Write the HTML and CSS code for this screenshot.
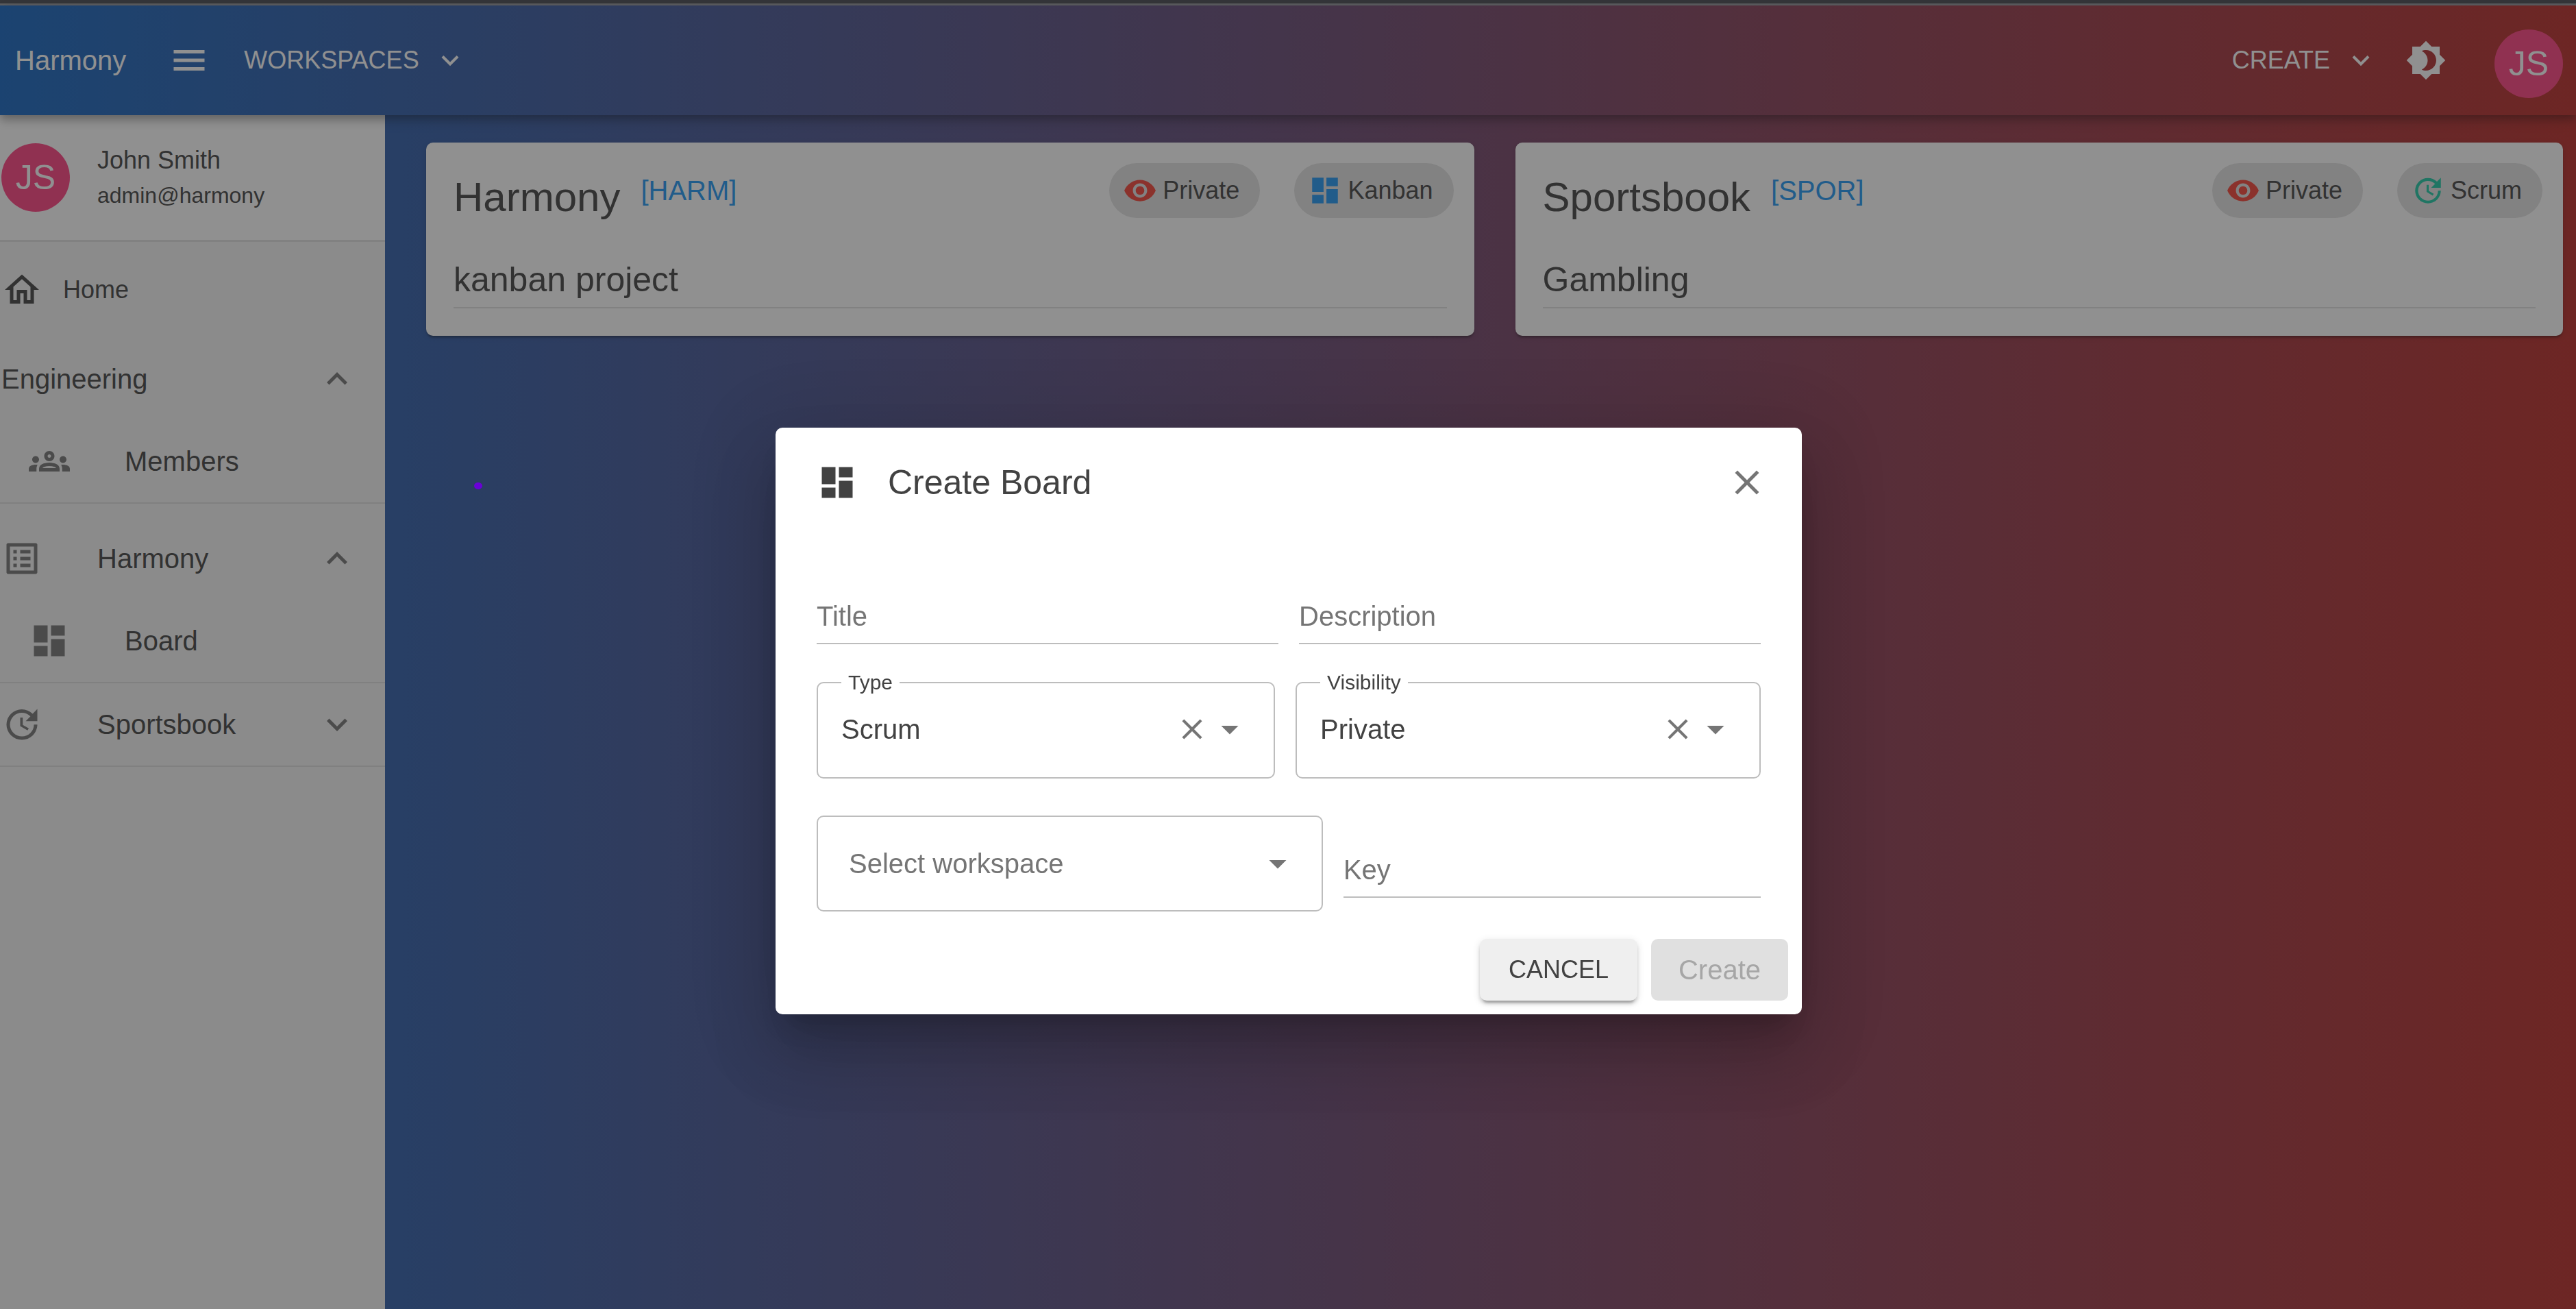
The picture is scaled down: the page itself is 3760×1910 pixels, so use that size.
FILE: index.html
```html
<!DOCTYPE html>
<html lang="en">
<head>
<meta charset="utf-8">
<title>Harmony</title>
<link rel="stylesheet" href="styles.css">
</head>
<body>
<svg class="sprite" aria-hidden="true">
  <symbol id="i-menu" viewBox="0 0 24 24"><path d="M3 18h18v-2H3v2zm0-5h18v-2H3v2zm0-7v2h18V6H3z"/></symbol>
  <symbol id="i-more" viewBox="0 0 24 24"><path d="M16.59 8.59L12 13.17 7.41 8.59 6 10l6 6 6-6z"/></symbol>
  <symbol id="i-less" viewBox="0 0 24 24"><path d="M12 8l-6 6 1.41 1.41L12 10.83l4.59 4.58L18 14z"/></symbol>
  <symbol id="i-theme" viewBox="0 0 24 24"><path d="M20 8.69V4h-4.69L12 .69 8.69 4H4v4.69L.69 12 4 15.31V20h4.69L12 23.31 15.31 20H20v-4.69L23.31 12 20 8.69zM12 18c-.89 0-1.74-.2-2.5-.55C11.56 16.5 13 14.42 13 12s-1.44-4.5-3.5-5.45C10.26 6.2 11.11 6 12 6c3.31 0 6 2.69 6 6s-2.69 6-6 6z"/></symbol>
  <symbol id="i-home" viewBox="0 0 24 24"><path d="M12 5.69l5 4.5V18h-2v-6H9v6H7v-7.81l5-4.5M12 3L2 12h3v8h6v-6h2v6h6v-8h3L12 3z"/></symbol>
  <symbol id="i-groups" viewBox="0 0 24 24"><path d="M4 13c1.1 0 2-.9 2-2s-.9-2-2-2-2 .9-2 2 .9 2 2 2zm1.13 1.1C4.76 14.04 4.39 14 4 14c-.99 0-1.93.21-2.78.58C.48 14.9 0 15.62 0 16.43V18h4.5v-1.61c0-.83.23-1.61.63-2.29zM20 13c1.1 0 2-.9 2-2s-.9-2-2-2-2 .9-2 2 .9 2 2 2zm4 3.43c0-.81-.48-1.53-1.22-1.85-.85-.37-1.79-.58-2.78-.58-.39 0-.76.04-1.13.1.4.68.63 1.46.63 2.29V18H24v-1.57zm-7.76-2.78c-1.17-.52-2.61-.9-4.24-.9-1.63 0-3.07.39-4.24.9C6.68 14.13 6 15.21 6 16.39V18h12v-1.61c0-1.18-.68-2.26-1.76-2.74zM8.07 16c.09-.23.13-.39.91-.69.97-.38 1.99-.56 3.02-.56s2.05.18 3.02.56c.77.3.81.46.91.69H8.07zM12 8c.55 0 1 .45 1 1s-.45 1-1 1-1-.45-1-1 .45-1 1-1m0-2c-1.66 0-3 1.34-3 3s1.34 3 3 3 3-1.34 3-3-1.34-3-3-3z"/></symbol>
  <symbol id="i-list" viewBox="0 0 24 24"><path d="M11 7h6v2h-6zm0 4h6v2h-6zm0 4h6v2h-6zM7 7h2v2H7zm0 4h2v2H7zm0 4h2v2H7zM20.1 3H3.9c-.5 0-.9.4-.9.9v16.2c0 .4.4.9.9.9h16.2c.4 0 .9-.5.9-.9V3.900c0-.5-.5-.9-.9-.9zM19 19H5V5h14v14z"/></symbol>
  <symbol id="i-board" viewBox="0 0 24 24"><path d="M3 13h8V3H3v10zm0 8h8v-6H3v6zm10 0h8V11h-8v10zm0-18v6h8V3h-8z"/></symbol>
  <symbol id="i-update" viewBox="0 0 24 24"><path d="M21 10.120h-6.780l2.740-2.820c-2.730-2.700-7.150-2.800-9.880-.1-2.730 2.710-2.730 7.080 0 9.790s7.150 2.710 9.880 0C18.320 15.650 19 14.080 19 12.100h2c0 1.980-.88 4.550-2.640 6.290-3.510 3.480-9.210 3.480-12.720 0-3.500-3.470-3.530-9.110-.02-12.580s9.140-3.470 12.650 0L21 3v7.120zM12.500 8v4.250l3.500 2.080-.72 1.210L11 13V8h1.500z"/></symbol>
  <symbol id="i-eye" viewBox="0 0 24 24"><path d="M12 4.500C7 4.500 2.730 7.610 1 12c1.730 4.390 6 7.500 11 7.500s9.270-3.110 11-7.500c-1.730-4.390-6-7.500-11-7.500zM12 17c-2.760 0-5-2.240-5-5s2.240-5 5-5 5 2.240 5 5-2.240 5-5 5zm0-8c-1.660 0-3 1.340-3 3s1.340 3 3 3 3-1.340 3-3-1.340-3-3-3z"/></symbol>
  <symbol id="i-close" viewBox="0 0 24 24"><path d="M19 6.410L17.590 5 12 10.590 6.410 5 5 6.410 10.590 12 5 17.590 6.410 19 12 13.410 17.590 19 19 17.590 13.410 12z"/></symbol>
  <symbol id="i-drop" viewBox="0 0 24 24"><path d="M7 10l5 5 5-5z"/></symbol>
</svg>

<div class="window-edge"></div>
<header class="appbar">
  <a class="brand" href="#">Harmony</a>
  <button class="icon-btn menu-btn" aria-label="Toggle navigation"><svg class="icon"><use href="#i-menu"/></svg></button>
  <button class="menu-link">WORKSPACES <svg class="icon small"><use href="#i-more"/></svg></button>
  <span class="spacer"></span>
  <button class="menu-link">CREATE <svg class="icon small"><use href="#i-more"/></svg></button>
  <button class="icon-btn theme-btn" aria-label="Toggle theme"><svg class="icon"><use href="#i-theme"/></svg></button>
  <span class="avatar bar-avatar">JS</span>
</header>

<div class="layout">
  <aside class="drawer">
    <div class="user">
      <span class="avatar">JS</span>
      <div class="user-text">
        <span class="user-name">John Smith</span>
        <span class="user-mail">admin@harmony</span>
      </div>
    </div>
    <nav class="nav">
      <a class="nav-row home" href="#"><svg class="icon"><use href="#i-home"/></svg>Home</a>
      <div class="group open first">
        <button class="nav-row"><span class="grow">Engineering</span><svg class="icon muted"><use href="#i-less"/></svg></button>
        <a class="nav-row sub" href="#"><svg class="icon muted"><use href="#i-groups"/></svg>Members</a>
      </div>
      <div class="group open">
        <button class="nav-row"><svg class="icon muted"><use href="#i-list"/></svg><span class="grow">Harmony</span><svg class="icon muted"><use href="#i-less"/></svg></button>
        <a class="nav-row sub" href="#"><svg class="icon muted"><use href="#i-board"/></svg>Board</a>
      </div>
      <div class="group">
        <button class="nav-row"><svg class="icon muted"><use href="#i-update"/></svg><span class="grow">Sportsbook</span><svg class="icon muted"><use href="#i-more"/></svg></button>
      </div>
    </nav>
  </aside>

  <main class="boards">
    <article class="card">
      <div class="card-head">
        <h2 class="card-title">Harmony</h2>
        <a class="card-key" href="#">[HARM]</a>
        <span class="spacer"></span>
        <span class="chip"><svg class="icon small red"><use href="#i-eye"/></svg>Private</span>
        <span class="chip"><svg class="icon small blue"><use href="#i-board"/></svg>Kanban</span>
      </div>
      <p class="card-text">kanban project</p>
    </article>
    <article class="card">
      <div class="card-head">
        <h2 class="card-title">Sportsbook</h2>
        <a class="card-key" href="#">[SPOR]</a>
        <span class="spacer"></span>
        <span class="chip"><svg class="icon small red"><use href="#i-eye"/></svg>Private</span>
        <span class="chip"><svg class="icon small teal"><use href="#i-update"/></svg>Scrum</span>
      </div>
      <p class="card-text">Gambling</p>
    </article>
  </main>
</div>

<div class="overlay">
  <form class="dialog" role="dialog" aria-labelledby="dialog-title">
    <div class="dialog-head">
      <svg class="icon"><use href="#i-board"/></svg>
      <h1 class="dialog-title" id="dialog-title">Create Board</h1>
      <button type="button" class="icon-btn muted" aria-label="Close"><svg class="icon"><use href="#i-close"/></svg></button>
    </div>
    <div class="fields">
      <div class="row even">
        <input class="line-input" type="text" placeholder="Title" aria-label="Title">
        <input class="line-input" type="text" placeholder="Description" aria-label="Description">
      </div>
      <div class="row pickers">
        <fieldset class="picker">
          <legend><label for="type">Type</label></legend>
          <input class="picker-value" id="type" type="text" value="Scrum">
          <button type="button" class="icon-btn muted" aria-label="Clear type"><svg class="icon small"><use href="#i-close"/></svg></button>
          <button type="button" class="icon-btn muted" aria-label="Open type list"><svg class="icon"><use href="#i-drop"/></svg></button>
        </fieldset>
        <fieldset class="picker">
          <legend><label for="visibility">Visibility</label></legend>
          <input class="picker-value" id="visibility" type="text" value="Private">
          <button type="button" class="icon-btn muted" aria-label="Clear visibility"><svg class="icon small"><use href="#i-close"/></svg></button>
          <button type="button" class="icon-btn muted" aria-label="Open visibility list"><svg class="icon"><use href="#i-drop"/></svg></button>
        </fieldset>
      </div>
      <div class="row target">
        <div class="picker bare">
          <input class="picker-value" type="text" placeholder="Select workspace" aria-label="Select workspace">
          <button type="button" class="icon-btn muted" aria-label="Open workspace list"><svg class="icon"><use href="#i-drop"/></svg></button>
        </div>
        <input class="line-input" type="text" placeholder="Key" aria-label="Key">
      </div>
    </div>
    <div class="actions">
      <button type="button" class="btn cancel">CANCEL</button>
      <button type="submit" class="btn create" disabled>Create</button>
    </div>
  </form>
</div>
<span class="pointer-dot"></span>
</body>
</html>
```
FILE: styles.css
```css
:root {
  --text: #424242;
  --muted: #757575;
  --line: #e0e0e0;
  --field-line: #bdbdbd;
  --brand-gradient: linear-gradient(to right, #1565c0, #b92b27);
}

* { box-sizing: border-box; }

html { height: 100%; }

body {
  margin: 0;
  min-height: 100%;
  display: flex;
  flex-direction: column;
  font-family: "Liberation Sans", Arial, sans-serif;
  font-size: 40px;
  line-height: 60px;
  color: var(--text);
  background: var(--brand-gradient);
}

button, input { font: inherit; color: inherit; border: 0; padding: 0; background: none; }
a { color: inherit; text-decoration: none; }
h1, h2, p { margin: 0; font-weight: 400; }

.sprite { position: absolute; width: 0; height: 0; }
.icon { display: block; flex: none; width: 60px; height: 60px; fill: currentColor; }
.icon.small { width: 50px; height: 50px; }
.icon-btn { display: flex; flex: none; }
.muted { color: var(--muted); }
.red { color: #f44336; }
.blue { color: #2196f3; }
.teal { color: #1ec8a5; }
.spacer, .grow { flex: 1; }

.avatar {
  flex: none;
  width: 100px;
  height: 100px;
  border-radius: 50%;
  background: #ff4081;
  color: #fff;
  font-size: 50px;
  line-height: 100px;
  text-align: center;
}

.window-edge { height: 8px; background: #35363a; border-bottom: 3px solid #5e5f62; }

.appbar {
  position: relative;
  z-index: 1;
  display: flex;
  align-items: center;
  height: 160px;
  padding: 0 19px 0 22px;
  color: #fff;
  background: var(--brand-gradient);
  box-shadow: 0 5px 10px -2px rgba(0, 0, 0, .2), 0 10px 12px rgba(0, 0, 0, .14), 0 2px 25px rgba(0, 0, 0, .12);
}
.menu-btn { margin: 0 50px 0 62px; }
.menu-link { display: flex; align-items: center; gap: 20px; font-size: 36px; }
.theme-btn { margin: 0 70px 0 40px; }
.bar-avatar { margin-top: 10px; }

.layout { flex: 1; display: flex; }

.drawer { flex: none; width: 562px; background: #f5f5f5; }
.user {
  display: flex;
  align-items: center;
  gap: 40px;
  padding: 40px 2px;
  background: #fff;
  border-bottom: 3px solid var(--line);
}
.user-text { display: flex; flex-direction: column; }
.user-name { font-size: 36px; line-height: 52px; }
.user-mail { font-size: 32px; line-height: 50px; }

.nav { display: flex; flex-direction: column; padding-top: 10px; }
.nav-row {
  display: flex;
  align-items: center;
  gap: 80px;
  width: 100%;
  height: 120px;
  padding: 0 40px 0 2px;
  text-align: left;
}
.nav-row.home { gap: 30px; font-size: 36px; }
.nav-row.sub { padding-left: 42px; }
.group { border-bottom: 2px solid rgba(0, 0, 0, .09); }
.group.open { padding-top: 20px; }
.group.first { padding-top: 10px; }

.boards {
  flex: 1;
  display: grid;
  grid-template-columns: 1fr 1fr;
  gap: 60px;
  align-items: start;
  padding: 40px 19px 40px 60px;
}
.card {
  padding: 30px 30px 40px 40px;
  border-radius: 10px;
  background: #fff;
  box-shadow: 0 5px 3px -2px rgba(0, 0, 0, .2), 0 2px 2px rgba(0, 0, 0, .14), 0 2px 8px rgba(0, 0, 0, .12);
}
.card-head { display: flex; align-items: flex-start; }
.card-title { margin-right: 30px; padding-top: 10px; font-size: 60px; line-height: 80px; }
.card-key { padding-top: 10px; color: #2196f3; }
.card-text {
  margin: 40px 10px 0 0;
  border-bottom: 2px solid var(--line);
  font-size: 50px;
  line-height: 80px;
}
.chip {
  display: flex;
  align-items: center;
  gap: 8px;
  height: 80px;
  padding: 0 30px 0 20px;
  border-radius: 40px;
  background: #e2e2e2;
  font-size: 36px;
}
.chip + .chip { margin-left: 50px; }

.overlay {
  position: fixed;
  inset: 8px 0 0;
  z-index: 2;
  display: flex;
  justify-content: center;
  align-items: flex-start;
  padding: 616px 0 0 2px;
  background: rgba(33, 33, 33, .5);
}

.dialog {
  width: 1498px;
  max-width: 100%;
  border-radius: 10px;
  background: #fff;
  box-shadow: 0 28px 38px -18px rgba(0, 0, 0, .2), 0 60px 95px 8px rgba(0, 0, 0, .14), 0 22px 115px 20px rgba(0, 0, 0, .12);
}
.dialog-head { display: flex; align-items: center; gap: 44px; padding: 48px 50px 0 60px; }
.dialog-title { flex: 1; font-size: 50px; line-height: 64px; }

.fields { display: flex; flex-direction: column; padding: 120px 60px 0; }
.row { display: grid; gap: 30px; align-items: start; }
.row.even { grid-template-columns: 1fr 1fr; }
.row.pickers { grid-template-columns: 67fr 68fr; margin-top: 38px; }
.row.target { grid-template-columns: 740fr 610fr; margin-top: 54px; align-items: end; }

.line-input { width: 100%; height: 84px; padding-top: 4px; border-bottom: 2px solid var(--field-line); }
.row.target .line-input { margin-bottom: 20px; }
input::placeholder { color: var(--muted); opacity: 1; }
input:focus { outline: none; }

.picker {
  display: flex;
  align-items: center;
  min-width: 0;
  height: 158px;
  margin: 0;
  padding: 0 34px 20px 34px;
  border: 2px solid var(--field-line);
  border-radius: 10px;
}
.picker legend { padding: 0 10px; font-size: 30px; line-height: 36px; }
.picker-value { flex: 1; min-width: 0; height: 60px; }
.picker.bare { height: 140px; padding: 0 34px 0 45px; }

.actions { display: flex; justify-content: flex-end; gap: 20px; padding: 40px 20px 20px; }
.btn { height: 90px; padding: 0 40px; border-radius: 10px; }
.cancel {
  min-width: 230px;
  background: #efefef;
  font-size: 36px;
  box-shadow: 0 8px 3px -5px rgba(0, 0, 0, .2), 0 5px 5px rgba(0, 0, 0, .14), 0 3px 12px rgba(0, 0, 0, .12);
}
.create { background: #e0e0e0; color: #a6a6a6; }

.pointer-dot {
  position: absolute;
  left: 692px;
  top: 704px;
  z-index: 3;
  width: 12px;
  height: 10px;
  border-radius: 50%;
  background: #6a00d8;
}
```
